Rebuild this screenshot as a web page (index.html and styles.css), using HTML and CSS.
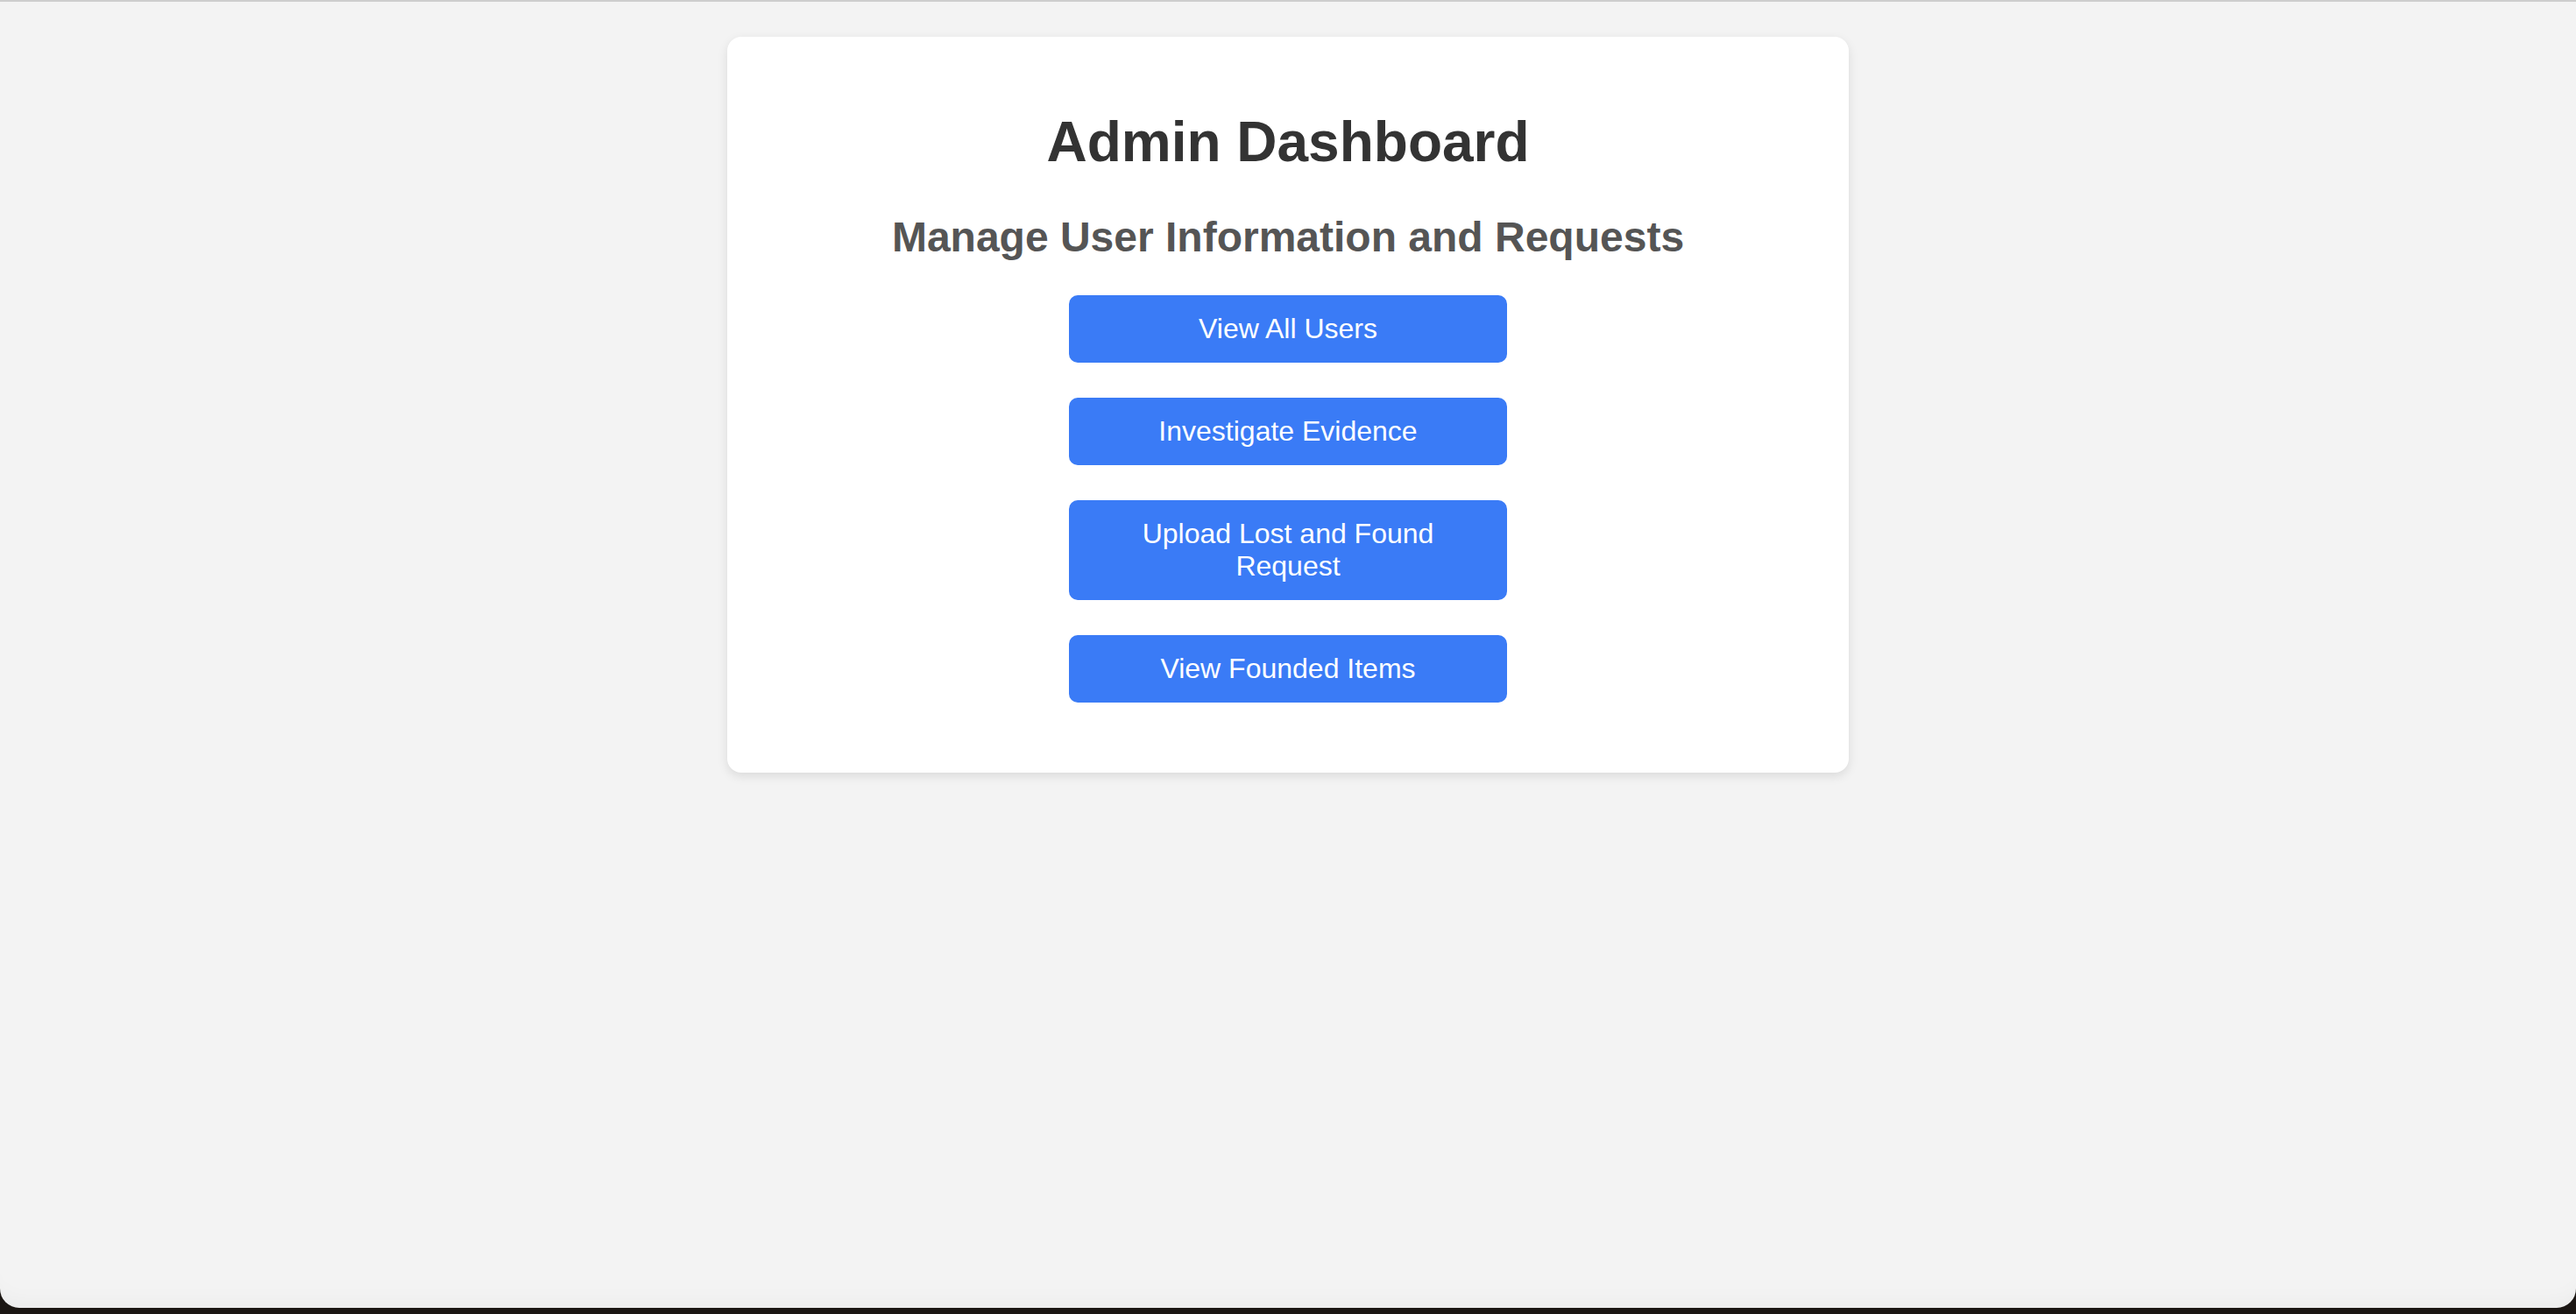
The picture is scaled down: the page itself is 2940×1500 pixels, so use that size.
FILE: index.html
```html
<!DOCTYPE html>
<html lang="en">
<head>
<meta charset="utf-8">
<title>Admin Dashboard</title>
<link rel="stylesheet" href="styles.css">
</head>
<body>
<div class="screen">
  <main class="card">
    <h1 class="title">Admin Dashboard</h1>
    <h2 class="subtitle">Manage User Information and Requests</h2>
    <div class="actions">
      <button class="btn">View All Users</button>
      <button class="btn">Investigate Evidence</button>
      <button class="btn">Upload Lost and Found Request</button>
      <button class="btn">View Founded Items</button>
    </div>
  </main>
</div>
</body>
</html>
```
FILE: styles.css
```css
html {
  background: #1b1613;
  height: 100%;
}
body {
  margin: 0;
  height: 100%;
  font-family: "Liberation Sans", Arial, Helvetica, sans-serif;
}
.screen {
  box-sizing: border-box;
  height: calc(100% - 7px);
  background: #f3f3f3;
  border-top: 2px solid #cdcdcd;
  border-radius: 0 0 22px 22px;
  padding-top: 40px;
  box-shadow: inset 0 -24px 30px -24px rgba(0, 0, 0, 0.05);
}
.card {
  box-sizing: border-box;
  width: 1280px;
  margin: 0 auto;
  background: #ffffff;
  border-radius: 16px;
  padding: 40px 40px 80px;
  box-shadow: 0 4px 12px rgba(0, 0, 0, 0.1);
  text-align: center;
}
.title {
  margin: 43px 0 0;
  font-size: 64px;
  font-weight: bold;
  color: #333333;
  line-height: normal;
}
.subtitle {
  margin: 44px 0 0;
  font-size: 48px;
  font-weight: bold;
  color: #555555;
  line-height: normal;
}
.actions {
  display: flex;
  flex-direction: column;
  align-items: center;
  gap: 40px;
  margin-top: 39px;
}
.btn {
  box-sizing: border-box;
  width: 500px;
  padding: 20px 40px;
  border: none;
  border-radius: 10px;
  background: #3a7bf6;
  color: #ffffff;
  font-family: "Liberation Sans", Arial, Helvetica, sans-serif;
  font-size: 32px;
  line-height: normal;
  cursor: pointer;
}
```
